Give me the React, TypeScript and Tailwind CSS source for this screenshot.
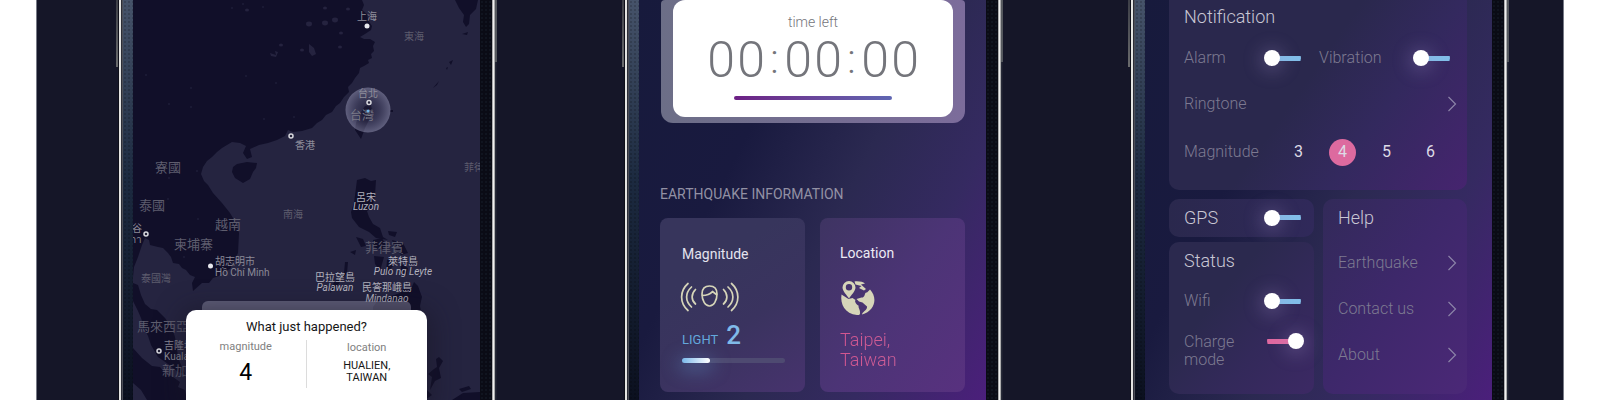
import type { ReactNode } from "react";

const land = "fill-[#110f29]";

const regions = [
  { x: 271, y: 40, text: "東海", size: 10 },
  { x: 150, y: 218, text: "南海", size: 10 },
  { x: 8, y: 282, text: "泰國灣", size: 10 },
  { x: 331, y: 171, text: "菲律賓海", size: 10 },
  { x: 22, y: 172, text: "寮國", size: 13 },
  { x: 6, y: 210, text: "泰國", size: 13 },
  { x: 82, y: 229, text: "越南", size: 13 },
  { x: 41, y: 249, text: "柬埔寨", size: 13 },
  { x: 4, y: 331, text: "馬來西亞", size: 13 },
  { x: 29, y: 375, text: "新加坡", size: 13 },
  { x: 232, y: 252, text: "菲律賓", size: 13 },
];

const cities = [
  { x: 234, y: 20, text: "上海" },
  { x: 235, y: 97, text: "台北" },
  { x: 172, y: 149, text: "香港" },
];

const islands = [
  { x: 233, y: 201, text: "呂宋", latin: "Luzon", gap: 9 },
  { x: 270, y: 265, text: "萊特島", latin: "Pulo ng Leyte", gap: 10 },
  { x: 202, y: 281, text: "巴拉望島", latin: "Palawan", gap: 10 },
  { x: 254, y: 291, text: "民答那峨島", latin: "Mindanao", gap: 11 },
];

const specks = [
  [99, 8, 1], [110, 4, 1], [130, 7, 1], [13, 75, 1], [58, 88, 1], [36, 104, 1], [58, 107, 1],
  [113, 76, 1], [131, 119, 1], [143, 83, 1], [161, 117, 1], [114, 10, 2], [176, 24, 3], [192, 23, 3],
  [202, 20, 3], [208, 33, 2], [148, 45, 2], [207, 47, 2], [169, 50, 2], [192, 8, 2], [215, 9, 2], [64, 171, 1],
  [35, 199, 1], [65, 219, 1], [51, 257, 1], [36, 178, 1],
];

function MapView() {
  return (
    <svg
      className="absolute inset-0 h-full w-full"
      viewBox="0 0 347 400"
      preserveAspectRatio="xMidYMin slice"
      role="img"
      aria-label="Map of the South China Sea"
    >
      <defs>
        <radialGradient id="pulse">
          <stop offset="0" stopColor="#7c7ca6" stopOpacity="0.02" />
          <stop offset="0.5" stopColor="#8686ac" stopOpacity="0.2" />
          <stop offset="1" stopColor="#a0a0c0" stopOpacity="0.48" />
        </radialGradient>
      </defs>
      <rect width="347" height="400" className="fill-[#252440]" />
      <g className={land}>
        <path d="M0 0H229L231 5 229 10 234 14 235 20 239 26 238 30 232 34 227 37 231 39 237 39 242 42 240 46 241 51 238 54 239 58 235 60 236 63 231 66 227 68 226 73 222 78 219 83 215 87 216 92 211 97 207 103 203 106 199 112 193 115 189 120 184 123 179 128 169 131 160 132 155 130 152 136 144 140 135 143 126 145 117 149 119 157 114 159 110 153 113 146 107 143 99 142 89 148 84 152 79 157 74 161 70 167 68 174 71 181 75 185 80 193 89 203 97 213 103 223 106 233 105 253 102 259 100 263 97 269 90 272 86 276 80 278 76 283 69 283 60 291 59 283 62 277 57 275 53 270 49 268 46 264 40 263 38 257 35 253 30 248 25 247 17 245 16 240 12 238 9 245 5 257 1 267 0 277Z" />
        <path d="M0 283 5 285 8 295 12 304 18 309 24 310 32 318 39 328 42 337 44 350 46 360 52 374 45 372 35 364 25 357 18 345 15 336 12 330 8 318 5 311 0 301Z" />
        <path d="M0 348 9 358 19 366 27 367 32 373 40 377 47 382 45 387 52 390 54 400H14L8 390 0 383Z" />
        <path d="M100 167 104 164 114 162 124 163 123 168 120 172 117 179 110 183 102 178 99 172Z" />
        <path d="M232 106 238 105 239 110 236 120 232 128 228 139 222 130 223 123 226 115Z" />
        <path d="M224 180 232 178 238 181 243 180 242 195 241 200 239 208 234 211 236 217 240 224 247 228 250 237 255 240 243 238 236 232 226 227 219 218 218 212 221 203Z" />
        <path d="M223 237 230 239 233 246 228 247ZM255 231 264 232 262 237 256 235ZM240 240 249 238 254 247 247 250 240 246ZM259 240 270 243 275 253 268 255 262 248ZM241 256 251 257 247 271 242 264ZM254 260 258 258 260 266 253 274ZM268 264 275 268 273 276 268 272ZM217 252 223 250 222 255ZM212 262 215 262 214 273 204 286 197 293 201 282 211 273Z" />
        <path d="M240 307 245 300 252 299 258 296 267 293 271 288 278 289 281 282 285 286 289 297 287 306 288 311 282 310 277 315 240 315Z" />
        <path d="M322 0H345L343 9 337 15 336 24 333 27 330 22 331 15 326 8ZM329 34 335 32 334 35ZM316 62 320 60 318 65ZM300 88 306 81 304 85ZM313 68 315 67 314 70ZM257 110H260V112H257Z" />
        <path d="M295 374 301 369 304 367 303 359 306 357 310 361 306 368 308 378 302 381 297 390 299 377ZM292 388 299 395 292 400ZM326 389 336 386 338 389 329 392ZM319 400 330 393 347 392V400Z" />
      </g>
      <g className="fill-[#25233f]">
        {specks.map(([x, y, r]) => (
          <ellipse key={`${x}-${y}`} cx={x} cy={y} rx={r} ry={r * 0.8} />
        ))}
        <path d="M176 44 181 48 183 54 179 56 176 52ZM137 53 143 55 142 51 145 52 143 57 138 56Z" />
      </g>
      <circle cx="235" cy="110" r="22.500" fill="url(#pulse)" />
      <g fontFamily="Roboto, 'Noto Sans CJK TC', sans-serif">
        <g className="fill-[#5e5d6e]">
          {regions.map((l) => (
            <text key={l.text} x={l.x} y={l.y} fontSize={l.size}>{l.text}</text>
          ))}
        </g>
        <text x="217" y="120" fontSize="12" className="fill-[#7b7a88]">台灣</text>
        <g className="fill-[#8f8e9b]" fontSize="10" textAnchor="middle">
          {cities.map((l) => (
            <text key={l.text} x={l.x} y={l.y}>{l.text}</text>
          ))}
        </g>
        <g className="fill-[#8b8a97]" fontSize="10">
          <text x="-1" y="232">谷</text>
          <text x="-3" y="243">กา</text>
          <text x="82" y="265">胡志明市</text>
          <text x="82" y="276">Hồ Chí Minh</text>
          <text x="31" y="349">吉隆坡</text>
          <text x="31" y="360">Kuala Lumpur</text>
        </g>
        <g className="fill-[#b3b2bd]" fontSize="10" textAnchor="middle">
          {islands.map((l) => (
            <g key={l.text}>
              <text x={l.x} y={l.y}>{l.text}</text>
              <text x={l.x} y={l.y + l.gap} fontStyle="italic">{l.latin}</text>
            </g>
          ))}
        </g>
      </g>
      <g className="fill-[#24233a] stroke-[#d8d8de]" strokeWidth="1.500">
        <circle cx="158" cy="136" r="2" />
        <circle cx="236" cy="102.500" r="2" />
        <circle cx="13" cy="234" r="2" />
        <circle cx="26" cy="351" r="2" />
      </g>
      <g className="fill-[#e8e8ee]">
        <circle cx="234" cy="26" r="2.500" />
        <circle cx="77.500" cy="266" r="2.500" />
      </g>
      <circle cx="235" cy="111" r="1.500" className="fill-[#6db4ea]" />
    </svg>
  );
}

function Phone({ children }: { children: ReactNode }) {
  return (
    <article className="flex min-w-0 flex-1">
      <div className="h-[67px] w-[2px] bg-linear-to-b from-[#3d3f47] to-[#6a6b6d]" />
      <div className="w-px bg-[#0d0e18]" />
      <div className="w-[2px] bg-[#e4e4e2]" />
      <div className="w-[2px] bg-linear-to-r from-[#1c1d28] to-[#5d6068]" />
      <div className="w-[10px] bg-[radial-gradient(#0000002a_1px,transparent_1px),linear-gradient(#46536a,#1c2a40_45%,#0b101f)] bg-size-[4px_4px,100%_100%]" />
      <div className="relative min-w-0 flex-1 overflow-hidden">{children}</div>
      <div className="w-3 bg-[#0a0b15] bg-[radial-gradient(#10141f_1px,transparent_1px)] bg-size-[4px_4px]" />
      <div className="w-[3px] bg-linear-to-r from-[#8b8b8d] via-[#f0f0f0] to-[#8b8b8d]" />
      <div className="w-[2px] bg-linear-to-r from-[#2b2f3c] to-[#191a2b]">
        <div className="h-[62px] bg-[#55585e]" />
      </div>
    </article>
  );
}

const screenBg =
  "h-full bg-[linear-gradient(117deg,#171a3c_0%,#191a3f_32%,#2b2951_56%,#352a61_76%,#4b1f7b_100%)]";

function MapScreen() {
  return (
    <div className="h-full">
      <MapView />
      <div className="relative flex h-full flex-col items-center pt-[301px]">
        <div className="h-[9px] w-[60%] rounded-t-md bg-[#9b9ab4]/50" />
        <section className="w-[241px] flex-1 rounded-t-[10px] bg-white pt-2 text-center text-[#161616] shadow-[0_4px_24px_6px_rgba(24,22,36,0.5)]">
          <h2 className="text-[13px] leading-[18px]">What just happened?</h2>
          <dl className="grid grid-cols-2 pt-1">
            <div className="h-12 border-r border-[#dcdcdc]">
              <dt className="text-[11px] leading-[14px] text-[#808080]">magnitude</dt>
              <dd className="pt-[5px] text-[23px] leading-[28px] text-black">4</dd>
            </div>
            <div>
              <dt className="text-[11px] leading-[16px] text-[#808080]">location</dt>
              <dd className="pt-1 text-[11px] leading-[12px]">
                HUALIEN,
                <br />
                TAIWAN
              </dd>
            </div>
          </dl>
        </section>
      </div>
    </div>
  );
}

function TremorIcon() {
  return (
    <svg className="h-[30px] w-[60px]" viewBox="0 0 60 30" fill="none" stroke="#d6d5b9" strokeWidth="1.700" strokeLinecap="round" strokeLinejoin="round" aria-hidden="true">
      <path d="M8 1.500C-.5 9-.5 21 8 28.500M11.500 5C5 11 5 19 11.500 25M15.500 7.500C11 12 11 18 15.500 22" />
      <path d="M51.500 1.500C60 9 60 21 51.500 28.500M48 5C54.500 11 54.500 19 48 25M43.500 7.500C48 12 48 18 43.500 22" />
      <path d="M22 12C22 6.500 25 4 29.500 4S37 6.500 37 12C37 19 33.500 24 29.500 24S22 19 22 12ZM22 13.500C26 13.500 30 12.500 32.500 9.500L37 13" />
    </svg>
  );
}

function GlobePinIcon() {
  return (
    <svg className="h-9 w-9" viewBox="0 0 36 36" fill="#d6d5b9" aria-hidden="true">
      <path d="M1.500 14.500C0 24 5 34 17 35C19.500 35.200 20 34.500 20 33C20.500 30 18 28 18.500 25.500C17 25 14 21.500 15.500 20L12.500 18L8.500 19Z" />
      <path d="M30 9.500C38 18 35 31 22 34.500C22 32 27.500 30 27 26.500L22.500 22.500L19 21.500L16.500 19L21.500 17.500C26 17.500 24 11.500 27 12.500Z" />
      <path d="M14.500 1.500C19 1 23 2 25 3.500L21 4.500L26 9L24 10.500L19 8L21.500 6L15.500 4.500Z" />
      <path fillRule="evenodd" d="M9 1A6.500 6.500 0 0 1 15.500 7.500C15.500 11 11 15.500 9 18.500C7 15.500 2.500 11 2.500 7.500A6.500 6.500 0 0 1 9 1ZM9 4A3.200 3.200 0 1 0 9 10.400A3.200 3.200 0 1 0 9 4Z" />
    </svg>
  );
}

function TimerScreen() {
  return (
    <div className={`${screenBg} px-[21px]`}>
      <section className="ml-px rounded-t rounded-b-[12px] bg-linear-to-r from-[#6c6e87] to-[#7c6c9b] px-3 pb-[6px]">
        <div className="flex h-[117px] flex-col items-center rounded-[12px] bg-white pt-3 text-[#74757b]">
          <h2 className="text-[14px] leading-5">
            <span className="font-light">time left</span>
          </h2>
          <div role="timer" className="flex justify-center pt-[2px] text-[50px] leading-[52px] font-light">
            {"00:00:00".split("").map((c, i) => (
              <span key={i} className={c === ":" ? "flex w-[17px] justify-center text-[40px]" : "flex w-[30px] justify-center"}>
                {c}
              </span>
            ))}
          </div>
          <div className="mt-[10px] h-1 w-[158px] rounded-full bg-linear-to-r from-[#6c1f84] to-[#5f66b2]" />
        </div>
      </section>
      <h2 className="pt-[61px] text-[14px] leading-5 text-[#9291a4]">EARTHQUAKE INFORMATION</h2>
      <div className="grid grid-cols-2 gap-[15px] pt-[14px]">
        <section className="h-[174px] rounded-lg bg-linear-145 from-[#37355c] from-30% via-[#3a335f] via-60% to-[#47336e] pt-[26px] pr-5 pl-[22px]">
          <h3 className="text-[14px] leading-5 text-[#e4e3ee]">Magnitude</h3>
          <div className="-ml-[2px] pt-[18px]">
            <TremorIcon />
          </div>
          <p className="flex items-baseline gap-2 pt-2 text-[13px] text-[#63a8dc]">
            LIGHT <strong className="text-[26px] leading-[30px] font-medium text-[#80bae9]">2</strong>
          </p>
          <div className="mt-2 h-[5px] rounded-full bg-[#4e4a71]">
            <div className="h-full w-[27%] rounded-full bg-linear-to-r from-[#7ab9ea] to-white shadow-[0_4px_18px_4px_rgba(105,170,225,0.35)]" />
          </div>
        </section>
        <section className="h-[174px] rounded-lg bg-linear-125 from-[#3e3462] via-[#4c3476] to-[#58317f] px-5 pt-[25px]">
          <h3 className="text-[14px] leading-5 text-[#eceaf4]">Location</h3>
          <div className="pt-[17px]">
            <GlobePinIcon />
          </div>
          <p className="bg-linear-to-r from-[#d2558f] to-[#c8679f] bg-clip-text pt-[14px] text-[18px] leading-5 font-light text-transparent">
            Taipei,
            <br />
            Taiwan
          </p>
        </section>
      </div>
    </div>
  );
}

function Toggle({ id, on = false }: { id: string; on?: boolean }) {
  return (
    <input
      id={id}
      type="checkbox"
      role="switch"
      defaultChecked={on}
      className="flex h-4 w-[37px] shrink-0 cursor-pointer appearance-none items-center rounded-full bg-[linear-gradient(#82bee9,#82bee9)] bg-size-[28px_5px] bg-right bg-no-repeat before:h-4 before:w-4 before:rounded-full before:bg-white before:shadow-[0_2px_18px_4px_rgba(170,150,210,0.28)] checked:justify-end checked:bg-[linear-gradient(#e069a0,#e069a0)] checked:bg-left"
    />
  );
}

function Chevron() {
  return (
    <svg className="h-4 w-[10px] shrink-0" viewBox="0 0 10 16" fill="none" stroke="#8c84a8" strokeWidth="1.200" aria-hidden="true">
      <path d="M1.500 1 8.500 8 1.500 15" />
    </svg>
  );
}

const rowText = "text-[16px] leading-[18px] font-light text-[#7d7a91]";
const headText = "text-[18px] leading-6 font-light text-[#c9c7d4]";

function SettingsScreen() {
  return (
    <div className={`${screenBg} pr-[25px] pl-6`}>
      <section className="h-[190px] rounded-b-[10px] bg-[linear-gradient(125deg,#2a284d_45%,#33295e_68%,#46246f)] pt-[5px] pl-[15px]">
        <h2 className={headText}>Notification</h2>
        <div className="grid h-[58px] grid-cols-[135px_1fr] items-center">
          <div className="flex items-center justify-between pr-[18px]">
            <label htmlFor="alarm" className={rowText}>Alarm</label>
            <Toggle id="alarm" />
          </div>
          <div className="flex items-center justify-between pr-[17px]">
            <label htmlFor="vibration" className={rowText}>Vibration</label>
            <Toggle id="vibration" />
          </div>
        </div>
        <a href="#ringtone" className={`flex h-[34px] items-center justify-between pr-[10px] ${rowText}`}>
          Ringtone <Chevron />
        </a>
        <div role="radiogroup" aria-labelledby="threshold" className="flex h-[62px] items-center justify-between pr-[23px]">
          <span id="threshold" className={rowText}>Magnitude</span>
          <span className="flex gap-[17px]">
            {["3", "4", "5", "6"].map((n) => (
              <label
                key={n}
                className="grid h-[27px] w-[27px] cursor-pointer place-items-center rounded-full text-[16px] text-[#dddbe6] has-checked:bg-[#dd6a9f]"
              >
                <input
                  type="radio"
                  name="magnitude"
                  value={n}
                  defaultChecked={n === "4"}
                  className="col-start-1 row-start-1 h-full w-full cursor-pointer appearance-none rounded-full"
                />
                <span className="col-start-1 row-start-1">{n}</span>
              </label>
            ))}
          </span>
        </div>
      </section>
      <div className="grid grid-cols-[145fr_144fr] gap-[9px] pt-[9px]">
        <div className="flex flex-col gap-[5px]">
          <section className="flex h-[38px] items-center justify-between rounded-[10px] bg-linear-to-r from-[#2a284d] to-[#30295a] pr-[13px] pb-px pl-[15px]">
            <label htmlFor="gps" className={headText}>GPS</label>
            <Toggle id="gps" />
          </section>
          <section className="h-[152px] rounded-[10px] bg-[linear-gradient(130deg,#2b294e_35%,#33295a_65%,#3c2964)] pt-[7px] pr-[13px] pl-[15px]">
            <h2 className={headText}>Status</h2>
            <div className="flex items-center justify-between pt-[19px]">
              <label htmlFor="wifi" className={rowText}>Wifi</label>
              <Toggle id="wifi" />
            </div>
            <div className="-mr-[3px] flex items-start justify-between pt-[23px]">
              <label htmlFor="charge" className={`w-16 ${rowText}`}>Charge mode</label>
              <Toggle id="charge" on />
            </div>
          </section>
        </div>
        <nav aria-label="Help" className="h-[195px] rounded-[10px] bg-[linear-gradient(125deg,#322a59,#3d286a_45%,#4b2877)] pt-[7px] pr-[10px] pl-[15px]">
          <h2 className={headText}>Help</h2>
          <ul className="grid gap-7 pt-6">
            {["Earthquake", "Contact us", "About"].map((t) => (
              <li key={t}>
                <a href={`#${t.split(" ")[0].toLowerCase()}`} className={`flex items-center justify-between ${rowText}`}>
                  {t} <Chevron />
                </a>
              </li>
            ))}
          </ul>
        </nav>
      </div>
    </div>
  );
}

export default function App() {
  return (
    <div className="bg-white px-9 font-[Roboto,'Noto_Sans_CJK_TC',sans-serif]">
      <main className="flex min-h-screen gap-[125px] border-x border-[#777a86] bg-[#151628] pr-[54px] pl-[79px]">
        <Phone>
          <MapScreen />
        </Phone>
        <Phone>
          <TimerScreen />
        </Phone>
        <Phone>
          <SettingsScreen />
        </Phone>
      </main>
    </div>
  );
}
